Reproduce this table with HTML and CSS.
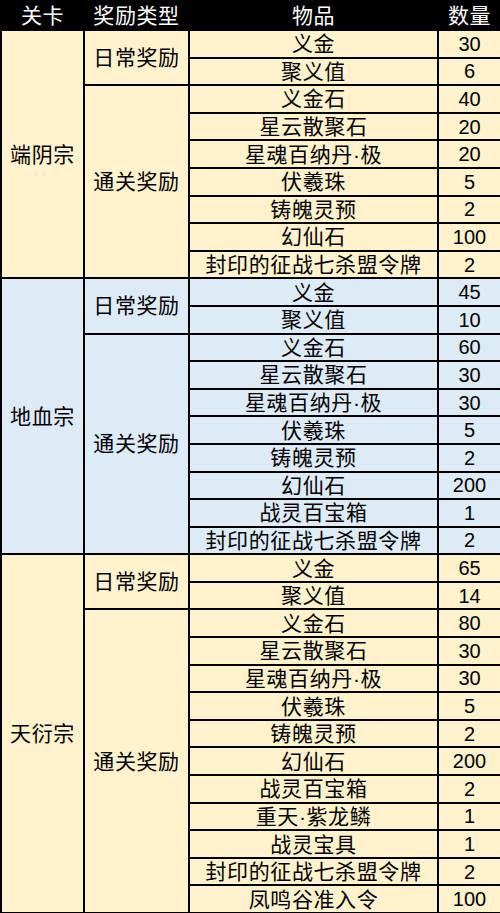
FILE: index.html
```html
<!DOCTYPE html>
<html lang="zh-CN">
<head>
<meta charset="utf-8">
<title>奖励表</title>
<link rel="stylesheet" href="styles.css">
</head>
<body>
<table class="reward">
  <colgroup>
    <col class="c-stage">
    <col class="c-type">
    <col class="c-item">
    <col class="c-qty">
  </colgroup>
  <thead>
    <tr class="head"><th>关卡</th><th>奖励类型</th><th>物品</th><th>数量</th></tr>
  </thead>
  <tbody class="sec gold">
    <tr><td class="stage" rowspan="9">端阴宗</td><td class="type" rowspan="2">日常奖励</td><td>义金</td><td class="num">30</td></tr>
    <tr><td>聚义值</td><td class="num">6</td></tr>
    <tr><td class="type" rowspan="7">通关奖励</td><td>义金石</td><td class="num">40</td></tr>
    <tr><td>星云散聚石</td><td class="num">20</td></tr>
    <tr><td>星魂百纳丹·极</td><td class="num">20</td></tr>
    <tr><td>伏羲珠</td><td class="num">5</td></tr>
    <tr><td>铸魄灵预</td><td class="num">2</td></tr>
    <tr><td>幻仙石</td><td class="num">100</td></tr>
    <tr><td>封印的征战七杀盟令牌</td><td class="num">2</td></tr>
  </tbody>
  <tbody class="sec blue">
    <tr><td class="stage" rowspan="10">地血宗</td><td class="type" rowspan="2">日常奖励</td><td>义金</td><td class="num">45</td></tr>
    <tr><td>聚义值</td><td class="num">10</td></tr>
    <tr><td class="type" rowspan="8">通关奖励</td><td>义金石</td><td class="num">60</td></tr>
    <tr><td>星云散聚石</td><td class="num">30</td></tr>
    <tr><td>星魂百纳丹·极</td><td class="num">30</td></tr>
    <tr><td>伏羲珠</td><td class="num">5</td></tr>
    <tr><td>铸魄灵预</td><td class="num">2</td></tr>
    <tr><td>幻仙石</td><td class="num">200</td></tr>
    <tr><td>战灵百宝箱</td><td class="num">1</td></tr>
    <tr><td>封印的征战七杀盟令牌</td><td class="num">2</td></tr>
  </tbody>
  <tbody class="sec gold">
    <tr><td class="stage" rowspan="13">天衍宗</td><td class="type" rowspan="2">日常奖励</td><td>义金</td><td class="num">65</td></tr>
    <tr><td>聚义值</td><td class="num">14</td></tr>
    <tr><td class="type" rowspan="11">通关奖励</td><td>义金石</td><td class="num">80</td></tr>
    <tr><td>星云散聚石</td><td class="num">30</td></tr>
    <tr><td>星魂百纳丹·极</td><td class="num">30</td></tr>
    <tr><td>伏羲珠</td><td class="num">5</td></tr>
    <tr><td>铸魄灵预</td><td class="num">2</td></tr>
    <tr><td>幻仙石</td><td class="num">200</td></tr>
    <tr><td>战灵百宝箱</td><td class="num">2</td></tr>
    <tr><td>重天·紫龙鳞</td><td class="num">1</td></tr>
    <tr><td>战灵宝具</td><td class="num">1</td></tr>
    <tr><td>封印的征战七杀盟令牌</td><td class="num">2</td></tr>
    <tr><td>凤鸣谷准入令</td><td class="num">100</td></tr>
  </tbody>
</table>
</body>
</html>
```

FILE: styles.css
```css
html, body {
  margin: 0;
  padding: 0;
  background: #ffffff;
}

.reward {
  width: 500px;
  border-collapse: collapse;
  table-layout: fixed;
  font-family: "Liberation Sans", "Noto Sans CJK SC", sans-serif;
  font-size: 21px;
  color: #000000;
}

.c-stage { width: 83px; }
.c-type { width: 105px; }
.c-item { width: 249px; }
.c-qty { width: 63px; }

.reward th,
.reward td {
  border: 2px solid #000000;
  padding: 0;
  text-align: center;
  vertical-align: middle;
  line-height: 1;
  letter-spacing: 0.6px;
  white-space: nowrap;
  overflow: hidden;
}

.head {
  height: 29px;
}

.head th {
  background: #000000;
  color: #ffffff;
  font-weight: normal;
}

.sec tr {
  height: 27.6px;
}

.gold td {
  background: #fff2cc;
}

.blue td {
  background: #ddebf7;
}

.reward .num {
  font-size: 20px;
  letter-spacing: 0;
}
```
